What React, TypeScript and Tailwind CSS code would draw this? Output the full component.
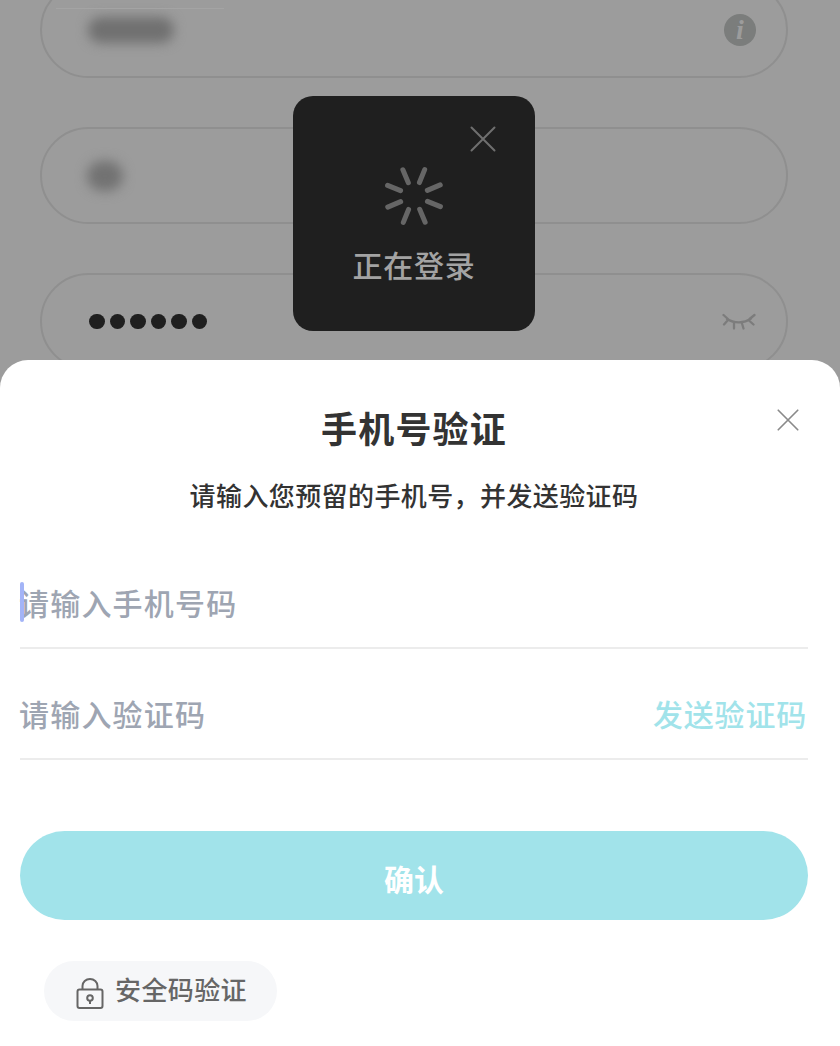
const cjk = "font-['Noto_Sans_CJK_SC','Noto_Sans',sans-serif]";

function CloseIcon({ className }: { className: string }) {
  return (
    <svg viewBox="0 0 26 26" className={className} fill="none" stroke="currentColor" strokeWidth="2" strokeLinecap="round">
      <path d="M1.5 1.5 24.5 24.5M24.5 1.5 1.5 24.5" />
    </svg>
  );
}

function Spinner() {
  const angles = [22, 67, 112, 157, 202, 247, 292, 337];
  return (
    <svg viewBox="0 0 62 62" className="h-[62px] w-[62px] text-[#666666]" fill="none" stroke="currentColor" strokeWidth="5" strokeLinecap="round">
      {angles.map((a) => (
        <path key={a} d="M31 2.5V16.5" transform={`rotate(${a} 31 31)`} />
      ))}
    </svg>
  );
}

export default function App() {
  return (
    <div className={`relative h-[1046px] w-[840px] overflow-hidden bg-[#9c9c9c] ${cjk}`}>
      {/* form behind the overlay */}
      <div className="-mt-[19px] flex flex-col gap-[49px] pl-10 pr-[52px]">
        <div className="relative flex h-[97px] items-center justify-between rounded-full border-2 border-[#8f8f8f] pl-[46px] pr-[30px]">
          <div className="h-[26px] w-[86px] rounded-full bg-[#707070] blur-[6px]" />
          <div className="flex h-8 w-8 items-center justify-center rounded-full bg-[#7b7d7c] font-['Liberation_Serif',serif] text-[28px] font-bold italic leading-none text-[#9c9c9c]">
            i
          </div>
        </div>
        <div className="flex h-[97px] items-center rounded-full border-2 border-[#8f8f8f] pl-[45px]">
          <div className="h-[30px] w-[36px] rounded-full bg-[#727272] blur-[6px]" />
        </div>
        <div className="flex h-[97px] items-center justify-between rounded-full border-2 border-[#8f8f8f] pl-[47px] pr-[30px]">
          <div className="flex gap-[5px]">
            {[0, 1, 2, 3, 4, 5].map((i) => (
              <span key={i} className="h-[15.5px] w-[15.5px] rounded-full bg-[#1f1f1f]" />
            ))}
          </div>
          <svg viewBox="0 0 34 18" className="h-[18px] w-[34px] text-[#7c7c7c]" fill="none" stroke="currentColor" strokeWidth="2.3" strokeLinecap="round">
            <path d="M5 6C12 10.5 22 10.5 29 5.5M1.5 2 6 6M2 11.5 6 7M12 10.5V15.5M20 10.5l1.5 5M27 7.5l4.5 4M32.5 2 27.5 6" />
          </svg>
        </div>
      </div>
      <div className="absolute left-14 top-2 h-px w-[168px] bg-[#a4a4a4]" />

      {/* loading toast */}
      <div className="absolute left-[293px] top-24 flex h-[235px] w-[242px] flex-col items-center rounded-[20px] bg-[#1f1f1f]">
        <CloseIcon className="absolute right-[39px] top-[30px] h-[26px] w-[26px] text-[#6f6f6f]" />
        <div className="mt-[69px]">
          <Spinner />
        </div>
        <p className="mt-[15px] text-[30px] font-medium leading-[44px] tracking-[0.7px] text-[#a3a3a3]">正在登录</p>
      </div>

      {/* bottom sheet */}
      <div className="absolute inset-x-0 bottom-0 top-[360px] rounded-t-[28px] bg-white pl-5 pr-8">
        <div className="relative">
          <h1 className="pt-10 text-center text-[36px] font-bold leading-[54px] tracking-[1.2px] text-[#333333]">手机号验证</h1>
          <CloseIcon className="absolute right-[9px] top-[49px] h-[22px] w-[22px] text-[#8a8a8a]" />
        </div>
        <p className="mt-[21px] text-center text-[26px] font-medium leading-[40px] tracking-[0.4px] text-[#333333]">
          请输入您预留的手机号，并发送验证码
        </p>

        <div className="relative mt-[42px] flex h-[92px] items-center border-b-2 border-[#ececec] pt-px">
          <span className="absolute left-0 top-[25px] h-10 w-1 rounded-full bg-[#a3b4f7]" />
          <span className="-ml-px text-[30px] font-medium tracking-[1.2px] text-[#9ea5b2]">请输入手机号码</span>
        </div>
        <div className="flex h-[111px] items-center justify-between border-b-2 border-[#ececec] pt-5">
          <span className="-ml-px text-[30px] font-medium tracking-[1.2px] text-[#9ea5b2]">请输入验证码</span>
          <span className="mr-px text-[30px] font-medium tracking-[0.8px] text-[#a1e3ea]">发送验证码</span>
        </div>

        <button className="mt-[71px] flex h-[89px] w-full items-center justify-center rounded-full bg-[#a1e3ea] pt-[6px] text-[30px] font-bold text-white">
          确认
        </button>

        <div className="ml-6 mt-[41px] flex h-[60px] w-[233px] items-center gap-[11px] rounded-full bg-[#f6f7f9] pl-8 text-[26px] font-medium tracking-[0.4px] text-[#666666]">
          <svg viewBox="0 0 28 31" className="mt-[4px] h-[31px] w-7" fill="none" stroke="currentColor" strokeWidth="2">
            <rect x="1.5" y="11.5" width="25" height="18.5" rx="2" />
            <path d="M6.5 11.5V8a7.5 7 0 0 1 15 0v3.5" />
            <circle cx="14" cy="20" r="2.8" />
            <path d="M14 22.8V26" />
          </svg>
          <span className="pb-[6px]">安全码验证</span>
        </div>
      </div>
    </div>
  );
}
